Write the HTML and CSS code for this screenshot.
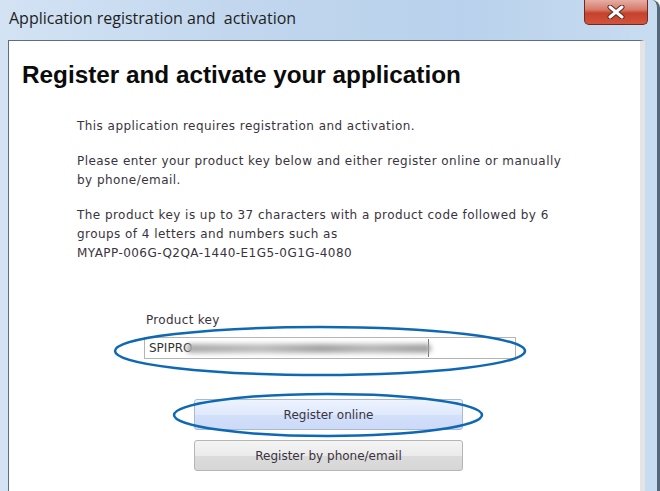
FILE: index.html
```html
<!DOCTYPE html>
<html lang="en">
<head>
<meta charset="UTF-8">
<title>Application registration and activation</title>
<link rel="stylesheet" href="styles.css">
</head>
<body>
  <div class="window">
    <div class="titlebar">
      <span class="title">Application registration and &nbsp;activation</span>
      <div class="close">
        <svg width="22" height="14" viewBox="0 0 22 14">
          <path d="M5 2 L17 12 M17 2 L5 12" stroke="#5a2a24" stroke-width="5" stroke-linecap="round"/>
          <path d="M5 2 L17 12 M17 2 L5 12" stroke="#ffffff" stroke-width="3" stroke-linecap="round"/>
        </svg>
      </div>
    </div>
    <div class="client">
      <h1>Register and activate your application</h1>
      <div class="info">
        <p>This application requires registration and activation.</p>
        <p>Please enter your product key below and either register online or manually<br>by phone/email.</p>
        <p>The product key is up to 37 characters with a product code followed by 6<br>groups of 4 letters and numbers such as<br>MYAPP-006G-Q2QA-1440-E1G5-0G1G-4080</p>
      </div>
      <div class="key">
        <label for="key">Product key</label>
        <div class="key-box" id="key">
          <span class="key-text">SPIPRO</span><span class="smudge"></span><span class="caret"></span>
          <svg class="ring ring-key" width="414" height="52" viewBox="0 0 414 52">
            <ellipse cx="207" cy="26" rx="205" ry="24" fill="none" stroke="#0f68b4" stroke-width="2.5"/>
          </svg>
        </div>
      </div>
      <div class="buttons">
        <div class="btn-wrap">
          <button class="btn btn-active">Register online</button>
          <svg class="ring ring-btn" width="312" height="46" viewBox="0 0 312 46">
            <ellipse cx="156" cy="23" rx="154" ry="21" fill="none" stroke="#0f68b4" stroke-width="2.5"/>
          </svg>
        </div>
        <button class="btn">Register by phone/email</button>
      </div>
    </div>
  </div>
</body>
</html>
```
FILE: styles.css
```css
/* Window frame */
body {
  margin: 0;
  font-family: "DejaVu Sans", Verdana, sans-serif;
}
.window {
  width: 660px;
  height: 491px;
  overflow: hidden;
  box-sizing: border-box;
  padding: 0 12px 0 8px;
  border-right: 3px solid #55677a;
  border-top-right-radius: 8px;
  background: linear-gradient(90deg, #d3e3f4 0%, #c2d7ee 35%, #b9d1ec 70%, #c8dcf1 100%);
  display: flex;
  flex-direction: column;
}
.titlebar {
  height: 40px;
  flex-shrink: 0;
  display: flex;
  align-items: flex-start;
  justify-content: space-between;
}
.title {
  font-family: "Open Sans", sans-serif;
  font-size: 16px;
  color: #1e1e1e;
  margin-top: 7px;
  margin-left: 1px;
}
.close {
  width: 64px;
  height: 25px;
  margin-right: -3px;
  box-sizing: border-box;
  border: 1px solid #6c2c24;
  border-top: none;
  border-radius: 0 0 5px 5px;
  background: linear-gradient(#e7aea4 0%, #d77a69 40%, #c5412c 55%, #d3543c 100%);
  display: flex;
  align-items: center;
  justify-content: center;
}

/* Client area */
.client {
  flex: 1;
  background: #ffffff;
  border-left: 1px solid #5e6e80;
  border-top: 1px solid #5e6e80;
  border-right: 5px solid #e4e4e4;
  padding: 18px 0 0 13px;
  color: #3a3340;
}
h1 {
  margin: 0;
  font-family: "Liberation Sans", Arial, sans-serif;
  font-size: 24.3px;
  font-weight: bold;
  color: #0b0b0b;
  line-height: 32px;
}
.info {
  margin: 26px 0 0 55px;
  font-size: 12px;
  letter-spacing: 0.45px;
  line-height: 19px;
}
.info p {
  margin: 0 0 15px;
}
.info p + p {
  margin-top: 16px;
}

/* Product key */
.key {
  margin: 48px 0 0 122px;
  font-size: 12px;
  letter-spacing: 0.3px;
}
.key label {
  display: block;
  margin-left: 2px;
  margin-bottom: 8px;
  line-height: 18px;
}
.key-box {
  position: relative;
  width: 372px;
  height: 22px;
  box-sizing: border-box;
  border: 1px solid #b4b4b4;
  display: flex;
  align-items: center;
  padding-left: 4px;
  font-size: 12px;
  letter-spacing: 0;
  color: #333;
}
.smudge {
  width: 245px;
  height: 9px;
  margin-left: -6px;
  background: linear-gradient(90deg, #a9a9a9, #bdbdbd 30%, #a2a2a2 55%, #b6b6b6 75%, #9f9f9f);
  border-radius: 5px;
  filter: blur(2.5px);
}
.caret {
  width: 1px;
  height: 18px;
  background: #777;
  margin-left: -3px;
}
.ring {
  position: absolute;
  pointer-events: none;
}
.ring-key {
  left: -32px;
  top: -13px;
}

/* Buttons */
.buttons {
  margin: 40px 0 0 172px;
  display: flex;
  flex-direction: column;
  gap: 10px;
}
.btn-wrap {
  position: relative;
}
.btn {
  width: 269px;
  height: 31px;
  font-family: "DejaVu Sans", Verdana, sans-serif;
  font-size: 12px;
  color: #3a3340;
  border: 1px solid #b5b5b5;
  border-radius: 3px;
  background: linear-gradient(#f4f4f4 0%, #ebebeb 50%, #dcdcdc 51%, #d6d6d6 100%);
}
.btn-active {
  border-color: #a9b9d2;
  background: linear-gradient(#edf3fe 0%, #dfe9fc 50%, #d3e0fa 51%, #ccdaf8 100%);
}
.ring-btn {
  left: -22px;
  top: -7px;
}
```
